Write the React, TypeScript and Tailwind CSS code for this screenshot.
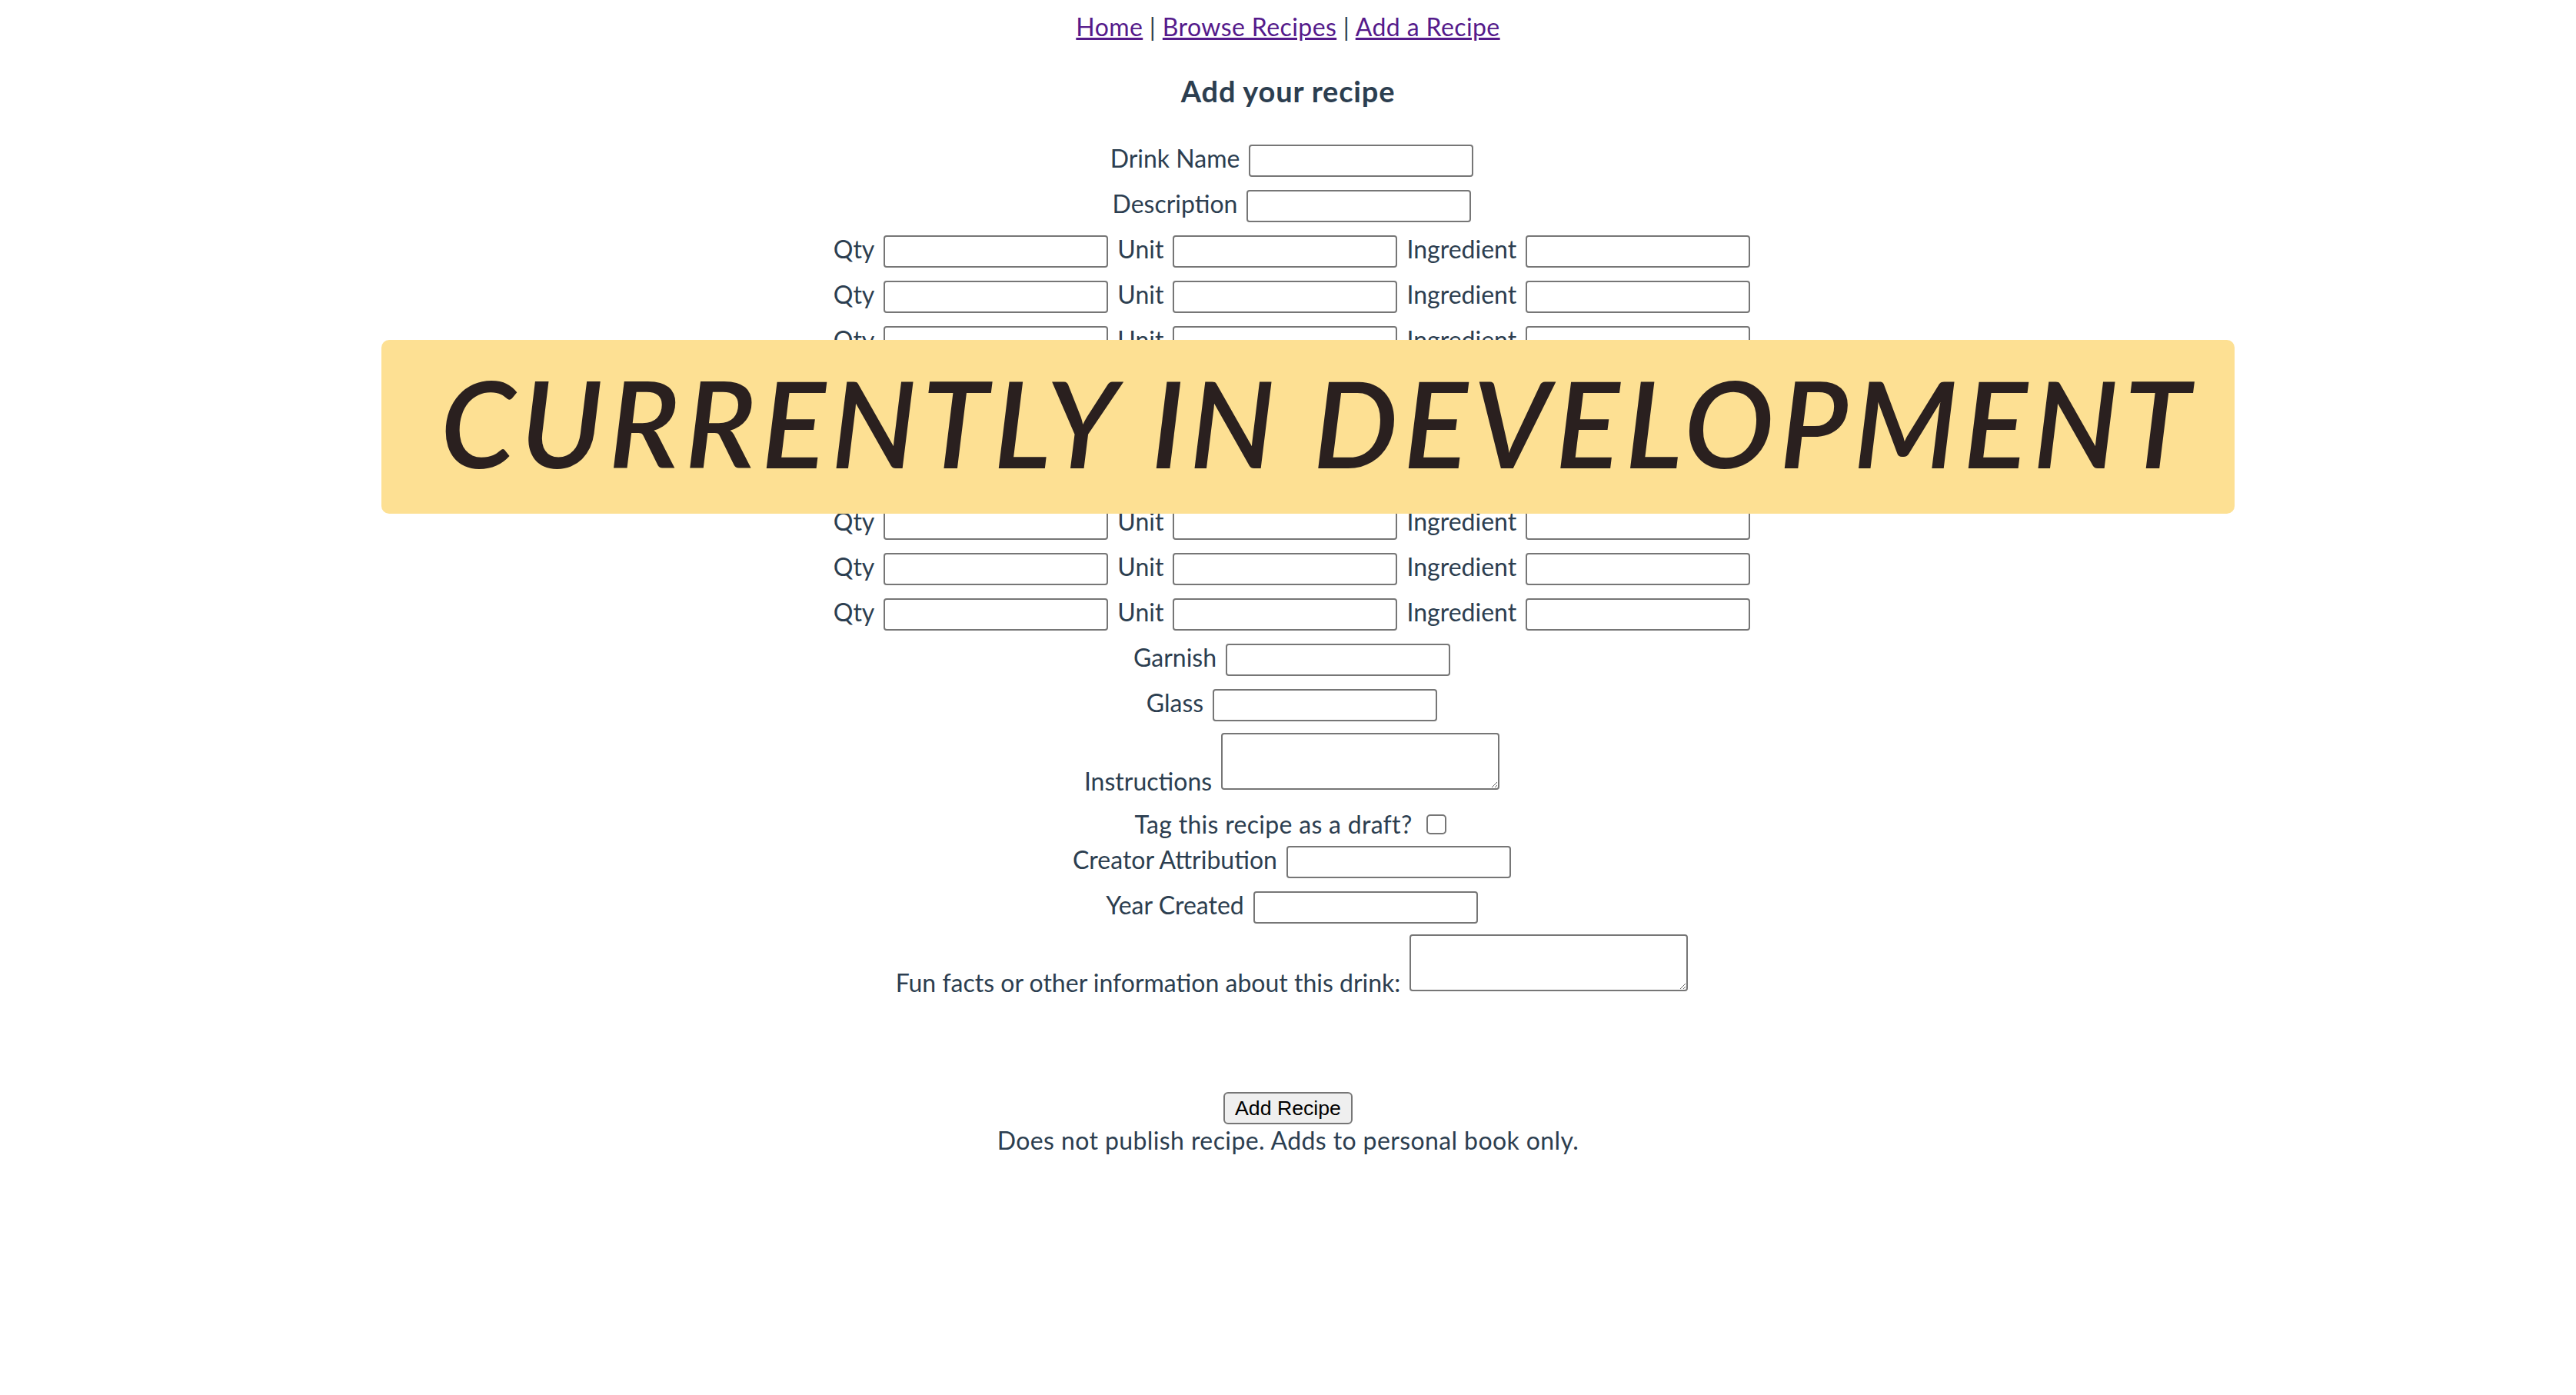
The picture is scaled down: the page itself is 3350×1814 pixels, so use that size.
import React from 'react';

const inputCls = 'w-[292px] h-[42px] border-2 border-[#767676] rounded-[4px] bg-white';
const areaCls = 'w-[362px] h-[74px] border-2 border-[#767676] rounded-[4px] bg-white resize';

function Field({ label, className = '' }: { label: string; className?: string }) {
    return (
        <div className={`flex justify-center items-end gap-[12px] pl-[10px] h-[42px] ${className}`}>
            <label className="leading-none pb-[8px] whitespace-nowrap">{label}</label>
            <input type="text" className={inputCls} />
        </div>
    );
}

function AreaField({ label, className = '' }: { label: string; className?: string }) {
    return (
        <div className={`flex justify-center items-end gap-[12px] pl-[10px] ${className}`}>
            <label className="leading-none mb-[-5px] whitespace-nowrap">{label}</label>
            <textarea className={areaCls} />
        </div>
    );
}

export default function App() {
    const ingredientRows = Array.from({ length: 9 }, (_, i) => i);

    return (
        <div className="relative min-h-screen w-full bg-white text-[#2c3e50] text-[32px] font-[Lato,sans-serif]">
            <div className="flex flex-col items-center">
                {/* Nav */}
                <nav className="mt-[19px] leading-none whitespace-pre tracking-[0.4px]">
                    <a href="#" className="underline text-[#551a8b]">Home</a>
                    {' | '}
                    <a href="#" className="underline text-[#551a8b]">Browse Recipes</a>
                    {' | '}
                    <a href="#" className="underline text-[#551a8b]">Add a Recipe</a>
                </nav>

                <h3 className="mt-[48px] text-[38px] font-bold leading-none tracking-[0.8px]">Add your recipe</h3>

                <form className="flex flex-col items-stretch w-full mt-[51px]">
                    <Field label="Drink Name" />
                    <Field label="Description" className="mt-[17px]" />

                    {ingredientRows.map((i) => (
                        <div key={i} className="flex justify-center items-end gap-[12px] pl-[10px] h-[42px] mt-[17px]">
                            <label className="leading-none pb-[8px]">Qty</label>
                            <input type="text" className={inputCls} />
                            <label className="leading-none pb-[8px]">Unit</label>
                            <input type="text" className={inputCls} />
                            <label className="leading-none pb-[8px]">Ingredient</label>
                            <input type="text" className={inputCls} />
                        </div>
                    ))}

                    <Field label="Garnish" className="mt-[17px]" />
                    <Field label="Glass" className="mt-[17px]" />
                    <AreaField label="Instructions" className="mt-[15px]" />

                    <div className="flex justify-center items-end gap-[18px] pl-[6px] mt-[29px]">
                        <label className="leading-none tracking-[0.3px]">Tag this recipe as a draft?</label>
                        <input
                            type="checkbox"
                            className="appearance-none w-[26px] h-[26px] mb-[3px] border-2 border-[#767676] rounded-[5px] bg-white"
                        />
                    </div>

                    <Field label="Creator Attribution" className="mt-[12px]" />
                    <Field label="Year Created" className="mt-[17px]" />
                    <AreaField label="Fun facts or other information about this drink:" className="mt-[14px]" />

                    <div className="flex justify-center mt-[131px]">
                        <button
                            type="button"
                            className="w-[168px] h-[42px] bg-[#efefef] border-2 border-[#767676] rounded-[6px] text-black text-[26.67px] leading-none font-['Liberation_Sans',Arial,sans-serif]"
                        >
                            Add Recipe
                        </button>
                    </div>
                    <p className="mt-[5px] text-center leading-none tracking-[0.4px]">Does not publish recipe. Adds to personal book only.</p>
                </form>
            </div>

            {/* Dev banner */}
            <div className="absolute left-[496px] top-[442px] w-[2410px] h-[226px] rounded-[10px] bg-[#fde093] flex items-center justify-center pl-[26px] pb-[12px]">
                <span className="italic font-semibold uppercase text-[156px] leading-none tracking-[7px] text-[#2a201f] whitespace-nowrap">
                    Currently in development
                </span>
            </div>
        </div>
    );
}
